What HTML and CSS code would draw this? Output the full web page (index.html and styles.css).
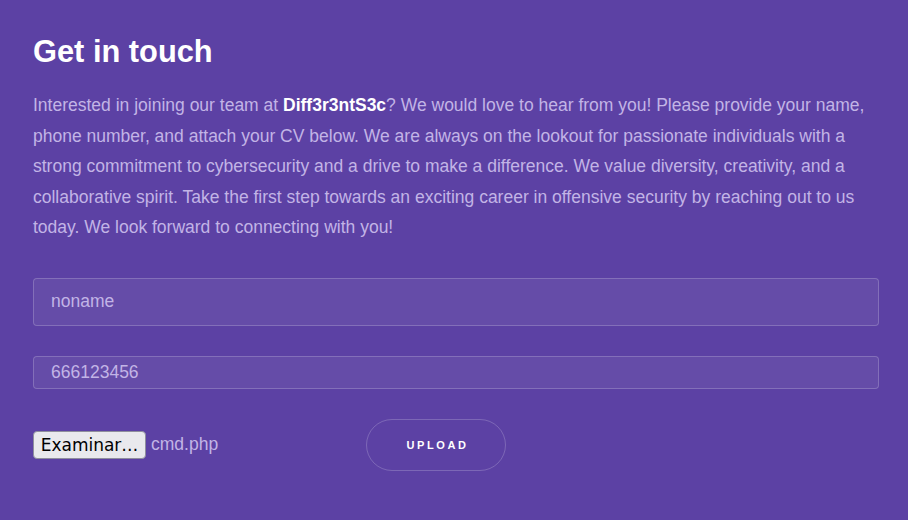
FILE: index.html
```html
<!DOCTYPE html>
<html>
<head>
<meta charset="utf-8">
<link rel="stylesheet" href="styles.css">
</head>
<body>
<main class="contact">
  <h1 class="title">Get in touch</h1>
  <p class="intro">Interested in joining our team at <strong>Diff3r3ntS3c</strong>? We would love to hear from you! Please provide your name, phone number, and attach your CV below. We are always on the lookout for passionate individuals with a strong commitment to cybersecurity and a drive to make a difference. We value diversity, creativity, and a collaborative spirit. Take the first step towards an exciting career in offensive security by reaching out to us today. We look forward to connecting with you!</p>
  <form class="form">
    <input class="field field-name" type="text" value="noname">
    <input class="field field-phone" type="text" value="666123456">
    <div class="actions">
      <div class="file">
        <button type="button" class="file-btn">Examinar…</button>
        <span class="file-name">cmd.php</span>
      </div>
      <button type="button" class="upload">UPLOAD</button>
    </div>
  </form>
</main>
</body>
</html>
```
FILE: styles.css
```css
html, body {
  margin: 0;
  padding: 0;
  background: #5c41a4;
}
body {
  font-family: "Liberation Sans", Arial, sans-serif;
  width: 908px;
  height: 520px;
  overflow: hidden;
}
.contact {
  padding: 32px 29px 0 33px;
}
.title {
  margin: 0;
  font-size: 30.8px;
  font-weight: bold;
  color: #ffffff;
  line-height: 40px;
}
.intro {
  margin: 18px 0 0;
  font-size: 17.5px;
  line-height: 30.5px;
  color: #c2b4e6;
}
.intro strong {
  color: #ffffff;
}
.form {
  margin-top: 35px;
  display: flex;
  flex-direction: column;
}
.field {
  box-sizing: border-box;
  width: 846px;
  margin: 0;
  background: #654ca8;
  border: 1px solid rgba(255, 255, 255, 0.2);
  border-radius: 4px;
  padding: 0 17px;
  font-family: "Liberation Sans", Arial, sans-serif;
  font-size: 17.5px;
  color: #c2b4e6;
  outline: none;
}
.field-name {
  height: 48px;
}
.field-phone {
  height: 33px;
  margin-top: 30px;
}
.actions {
  margin-top: 30px;
  display: flex;
  align-items: center;
}
.file {
  width: 333px;
  display: flex;
  align-items: center;
  gap: 5px;
}
.file-btn {
  box-sizing: border-box;
  height: 28px;
  width: 113px;
  padding: 0;
  background: #e9e9ed;
  border: 1px solid #8f8f9d;
  border-radius: 4px;
  font-family: "DejaVu Sans", sans-serif;
  font-size: 17px;
  color: #000000;
}
.file-name {
  font-size: 17.5px;
  color: #c2b4e6;
}
.upload {
  box-sizing: border-box;
  width: 140px;
  height: 52px;
  background: transparent;
  border: 1px solid rgba(255, 255, 255, 0.2);
  border-radius: 26px;
  font-family: "Liberation Sans", Arial, sans-serif;
  font-size: 11px;
  font-weight: bold;
  letter-spacing: 2.6px;
  padding: 0 0 0 3px;
  color: #ffffff;
}
```
